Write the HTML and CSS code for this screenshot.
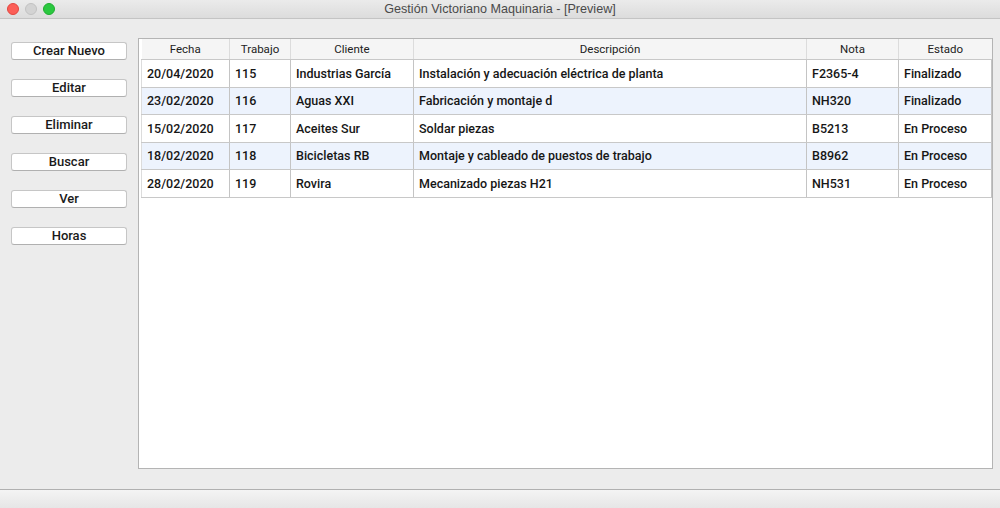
FILE: index.html
```html
<!DOCTYPE html>
<html lang="es">
<head>
<meta charset="utf-8">
<title>Gestión Victoriano Maquinaria - [Preview]</title>
<link rel="stylesheet" href="styles.css">
</head>
<body>
<div class="window">
  <header class="titlebar">
    <div class="lights">
      <span class="light red"></span>
      <span class="light gray"></span>
      <span class="light green"></span>
    </div>
    <div class="title">Gestión Victoriano Maquinaria - [Preview]</div>
  </header>
  <main class="main">
    <nav class="sidebar">
      <button class="btn">Crear Nuevo</button>
      <button class="btn">Editar</button>
      <button class="btn">Eliminar</button>
      <button class="btn">Buscar</button>
      <button class="btn">Ver</button>
      <button class="btn">Horas</button>
    </nav>
    <section class="panel">
      <table class="grid">
        <colgroup>
          <col class="c-fecha"><col class="c-trabajo"><col class="c-cliente"><col class="c-desc"><col class="c-nota"><col class="c-estado">
        </colgroup>
        <thead>
          <tr><th>Fecha</th><th>Trabajo</th><th>Cliente</th><th>Descripción</th><th>Nota</th><th>Estado</th></tr>
        </thead>
        <tbody>
          <tr class="r1"><td>20/04/2020</td><td>115</td><td>Industrias García</td><td>Instalación y adecuación eléctrica de planta</td><td>F2365-4</td><td>Finalizado</td></tr>
          <tr class="r2 alt"><td>23/02/2020</td><td>116</td><td>Aguas XXI</td><td>Fabricación y montaje d</td><td>NH320</td><td>Finalizado</td></tr>
          <tr class="r1"><td>15/02/2020</td><td>117</td><td>Aceites Sur</td><td>Soldar piezas</td><td>B5213</td><td>En Proceso</td></tr>
          <tr class="r2 alt"><td>18/02/2020</td><td>118</td><td>Bicicletas RB</td><td>Montaje y cableado de puestos de trabajo</td><td>B8962</td><td>En Proceso</td></tr>
          <tr class="r1"><td>28/02/2020</td><td>119</td><td>Rovira</td><td>Mecanizado piezas H21</td><td>NH531</td><td>En Proceso</td></tr>
        </tbody>
      </table>
    </section>
  </main>
  <footer class="statusbar"></footer>
</div>
</body>
</html>
```
FILE: styles.css
```css
* { box-sizing: border-box; }
html, body { margin: 0; padding: 0; }
body {
  width: 1000px;
  height: 508px;
  overflow: hidden;
  font-family: "Liberation Sans", Arial, sans-serif;
  background: #ececec;
  color: #1e1e1e;
}
.window {
  display: flex;
  flex-direction: column;
  height: 508px;
}
.titlebar {
  height: 19px;
  flex: none;
  position: relative;
  background: linear-gradient(#ebebeb, #dcdcdc);
  border-bottom: 1px solid #c4c4c4;
  display: flex;
  align-items: center;
  justify-content: center;
}
.lights {
  position: absolute;
  left: 7px;
  top: 3px;
  display: flex;
  gap: 6px;
}
.light {
  width: 12px;
  height: 12px;
  border-radius: 50%;
  display: block;
}
.red { background: #fc5e57; border: 1px solid #e2463f; }
.gray { background: #d3d3d3; border: 1px solid #c2c2c2; }
.green { background: #2bc840; border: 1px solid #1fad2f; }
.title {
  font-size: 12.6px;
  color: #4a4a4a;
  line-height: 18px;
}
.main {
  flex: 1;
  display: flex;
  padding: 19px 7px 20px 11px;
}
.sidebar {
  width: 116px;
  flex: none;
  display: flex;
  flex-direction: column;
  gap: 19px;
  padding-top: 4px;
  margin-right: 11px;
}
.btn {
  height: 18px;
  width: 116px;
  padding: 0;
  background: #ffffff;
  border: 1px solid #c6c6c6;
  border-bottom-color: #b0b0b0;
  border-radius: 3px;
  font-family: Roboto, "Liberation Sans", Arial, sans-serif;
  font-size: 13px;
  font-weight: 500;
  color: #1a1a1a;
  line-height: 16px;
  text-align: center;
}
.panel {
  flex: 1;
  background: #ffffff;
  border: 1px solid #b4b4b4;
  padding-left: 2px;
}
.grid {
  border-collapse: collapse;
  table-layout: fixed;
  width: 850px;
  font-size: 12.5px;
  font-family: Roboto, "Liberation Sans", Arial, sans-serif;
}
.c-fecha { width: 88px; }
.c-trabajo { width: 61px; }
.c-cliente { width: 123px; }
.c-desc { width: 393px; }
.c-nota { width: 92px; }
.c-estado { width: 93px; }
.grid th {
  height: 20px;
  background: #f5f5f5;
  font-weight: normal;
  font-size: 11.5px;
  color: #222222;
  text-align: center;
  border-left: 1px solid #dcdcdc;
  border-bottom: 1px solid #c8c8c8;
  padding: 0;
}
.grid th:first-child { border-left: none; }
.grid td {
  padding: 0 0 0 5px;
  white-space: nowrap;
  overflow: hidden;
  border-left: 1px solid #c4c4c4;
  border-bottom: 1px solid #c8c8c8;
  font-weight: 500;
  color: #161616;
}
.grid td:first-child { border-left: 1px solid #dcdcdc; }
.grid td:last-child { border-right: 1px solid #c4c4c4; }
.r1 td { height: 28px; }
.r2 td { height: 27px; }
.alt td { background: #edf3fd; }
.statusbar {
  height: 19px;
  flex: none;
  border-top: 1px solid #b0b0b0;
  background: linear-gradient(#f4f4f4, #e6e6e6);
}
```
